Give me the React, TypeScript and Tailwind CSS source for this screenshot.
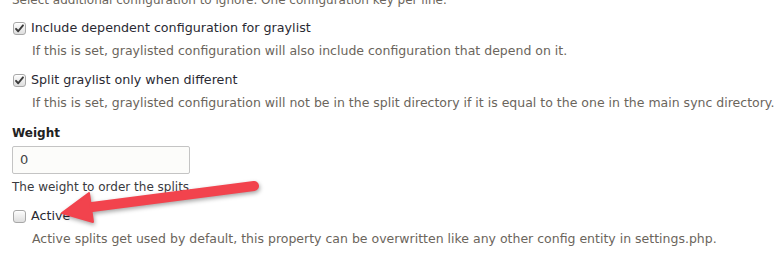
const Check = ({ checked }: { checked: boolean }) => (
  <span className="relative inline-flex h-[13px] w-[13px] shrink-0 items-center justify-center rounded-[3px] border border-[#a8a8a8] bg-gradient-to-b from-[#fdfdfd] to-[#dedede] shadow-[inset_0_1px_0_#fff]">
    {checked && (
      <svg viewBox="0 0 12 12" className="h-[11px] w-[11px]">
        <path d="M2.2 6.4 L4.6 9 L9.8 2.6" fill="none" stroke="#3b3b3b" strokeWidth="2.1" strokeLinecap="round" strokeLinejoin="round" />
      </svg>
    )}
  </span>
);

const Option = ({ checked, label, desc, className }: { checked: boolean; label: string; desc: string; className: string }) => (
  <div className={className}>
    <label className="flex h-[18px] items-center gap-[5px] pl-[1px] text-[12.7px] leading-[18px] text-[#2a2a33]">
      <Check checked={checked} />
      {label}
    </label>
    <p className="mt-[6px] h-4 pl-5 text-[12.5px] leading-4 text-[#6b655c]">{desc}</p>
  </div>
);

export default function App() {
  return (
    <div className="relative h-[258px] w-[781px] overflow-hidden bg-white pl-3 font-['DejaVu_Sans',sans-serif]">
      <p className="-mt-2 h-4 text-[12px] leading-4 text-[#6b655c]">
        Select additional configuration to ignore. One configuration key per line.
      </p>

      <Option
        className="mt-[11px]"
        checked
        label="Include dependent configuration for graylist"
        desc="If this is set, graylisted configuration will also include configuration that depend on it."
      />
      <Option
        className="mt-3"
        checked
        label="Split graylist only when different"
        desc="If this is set, graylisted configuration will not be in the split directory if it is equal to the one in the main sync directory."
      />

      <div className="mt-[13px]">
        <div className="h-[18px] text-[12px] font-bold leading-[18px] text-[#222]">Weight</div>
        <div className="mt-1 flex h-[28px] w-[178px] items-center rounded-[2px] border border-[#c4c4c4] bg-[#fcfcfa] pl-[7px] text-[13px] text-[#444]">
          0
        </div>
        <p className="mt-[5px] h-4 text-[12px] leading-4 text-[#3a3a40]">The weight to order the splits.</p>
      </div>

      <Option
        className="mt-3"
        checked={false}
        label="Active"
        desc="Active splits get used by default, this property can be overwritten like any other config entity in settings.php."
      />

      <svg className="pointer-events-none absolute left-0 top-0" width="781" height="258" style={{ filter: 'drop-shadow(1px 2px 2px rgba(0,0,0,0.35))' }}>
        <line x1="254" y1="186" x2="92" y2="207" stroke="#f2434d" strokeWidth="10" strokeLinecap="round" />
        <polygon points="62,213 89,193 93,222" fill="#f2434d" strokeLinejoin="round" stroke="#f2434d" strokeWidth="2" />
      </svg>
    </div>
  );
}
